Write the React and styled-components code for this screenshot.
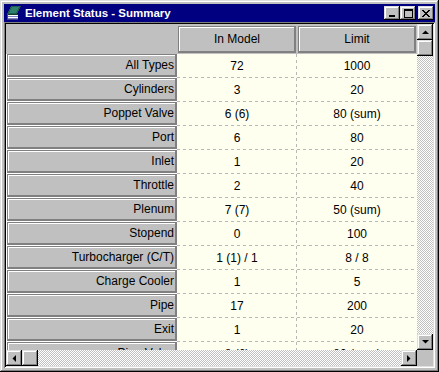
import React from 'react';
import styled, { createGlobalStyle } from 'styled-components';

const GlobalStyle = createGlobalStyle`
  html, body {
    margin: 0;
    padding: 0;
    background: #c0c0c0;
  }
  * {
    box-sizing: border-box;
  }
`;

const rows = [
  ['All Types', '72', '1000'],
  ['Cylinders', '3', '20'],
  ['Poppet Valve', '6 (6)', '80 (sum)'],
  ['Port', '6', '80'],
  ['Inlet', '1', '20'],
  ['Throttle', '2', '40'],
  ['Plenum', '7 (7)', '50 (sum)'],
  ['Stopend', '0', '100'],
  ['Turbocharger (C/T)', '1 (1) / 1', '8 / 8'],
  ['Charge Cooler', '1', '5'],
  ['Pipe', '17', '200'],
  ['Exit', '1', '20'],
  ['Pipe Valve', '8 (6)', '80 (sum)'],
];

const raised = `
  box-shadow: inset -1px -1px #000, inset 1px 1px #dfdfdf,
    inset -2px -2px #808080, inset 2px 2px #fff;
`;

const Window = styled.div`
  width: 439px;
  height: 372px;
  padding: 4px;
  background: #c0c0c0;
  display: flex;
  flex-direction: column;
  font-family: 'Liberation Sans', Arial, sans-serif;
  font-size: 12px;
  color: #000;
  ${raised}
`;

const TitleBar = styled.div`
  height: 18px;
  background: #000080;
  display: flex;
  align-items: center;
  padding: 0 1px 0 2px;
  gap: 3px;
`;

const Title = styled.span`
  flex: 1;
  color: #fff;
  font-weight: bold;
  font-size: 11.5px;
  white-space: nowrap;
`;

const CaptionButtons = styled.div`
  display: flex;
  align-items: center;
`;

const CaptionButton = styled.div`
  width: 16px;
  height: 14px;
  background: #c0c0c0;
  display: flex;
  align-items: center;
  justify-content: center;
  margin-left: ${(p) => (p.$gap ? '2px' : '0')};
  ${raised}
`;

const Client = styled.div`
  flex: 1;
  padding: 2px;
  display: grid;
  grid-template-columns: 411px 16px;
  grid-template-rows: 326px 16px;
  box-shadow: inset 1px 1px #808080, inset -1px -1px #fff,
    inset 2px 2px #000, inset -2px -2px #dfdfdf;
`;

const GridArea = styled.div`
  overflow: hidden;
  background: #c0c0c0;
`;

const Table = styled.div`
  display: grid;
  grid-template-columns: 171px 120px 120px;
  grid-template-rows: 30px;
  grid-auto-rows: 24px;
`;

const Corner = styled.div`
  background: #c0c0c0;
`;

const ColHeadSlot = styled.div`
  background: #c0c0c0;
  padding: 2px 1px 1px 1px;
`;

const HeadButton = styled.div`
  height: 100%;
  background: #c0c0c0;
  border: 1px solid #808080;
  border-right-width: 2px;
  border-bottom-width: 2px;
  box-shadow: inset 1px 1px #fff;
  display: flex;
  align-items: center;
  justify-content: ${(p) => (p.$right ? 'flex-end' : 'center')};
  padding: 0 1px 0 2px;
  white-space: nowrap;
  overflow: hidden;
`;

const RowHeadSlot = styled.div`
  background: #fff;
  padding: 0 0 1px 1px;
`;

const Cell = styled.div`
  display: flex;
  align-items: center;
  justify-content: center;
  white-space: nowrap;
  background: ${(p) =>
      p.$divider
        ? 'repeating-linear-gradient(to bottom, #b8b8b8 0 3px, transparent 3px 6px) right top / 1px 100% no-repeat, '
        : ''}
    repeating-linear-gradient(to right, #b8b8b8 0 3px, transparent 3px 6px) left bottom / 100% 1px no-repeat,
    #fffff0;
`;

const VScroll = styled.div`
  display: flex;
  flex-direction: column;
`;

const HScroll = styled.div`
  display: flex;
`;

const Track = styled.div`
  flex: 1;
  background: repeating-conic-gradient(#c0c0c0 0 25%, #fff 0 50%) 0 0 / 2px 2px;
`;

const ScrollButton = styled.div`
  width: 16px;
  height: 16px;
  flex: none;
  background: #c0c0c0;
  display: flex;
  align-items: center;
  justify-content: center;
  ${raised}
`;

const SizeCorner = styled.div`
  background: #c0c0c0;
`;

const BookIcon = () => (
  <svg width="16" height="16" viewBox="0 0 16 16" shapeRendering="crispEdges">
    <polygon points="5,1 15,1 11,9 1,9" fill="#1f5f4f" />
    <polygon points="6,2 13,2 10,8 3,8" fill="#2f7f6a" />
    <rect x="1" y="9" width="11" height="1" fill="#0f3f33" />
    <rect x="2" y="10" width="10" height="4" fill="#fff" />
    <rect x="2" y="11" width="10" height="1" fill="#8080c0" />
    <rect x="2" y="13" width="10" height="1" fill="#8080c0" />
    <rect x="1" y="9" width="1" height="6" fill="#404080" />
    <rect x="1" y="14" width="11" height="1" fill="#404080" />
  </svg>
);

const MinGlyph = () => (
  <svg width="8" height="7" viewBox="0 0 8 7" shapeRendering="crispEdges">
    <rect x="1" y="5" width="6" height="2" fill="#000" />
  </svg>
);

const MaxGlyph = () => (
  <svg width="9" height="9" viewBox="0 0 9 9" shapeRendering="crispEdges">
    <rect x="0" y="0" width="9" height="2" fill="#000" />
    <rect x="0" y="0" width="1" height="9" fill="#000" />
    <rect x="8" y="0" width="1" height="9" fill="#000" />
    <rect x="0" y="8" width="9" height="1" fill="#000" />
  </svg>
);

const CloseGlyph = () => (
  <svg width="8" height="7" viewBox="0 0 8 7" shapeRendering="crispEdges">
    {[0, 1, 2, 3, 4, 5, 6].map((i) => (
      <React.Fragment key={i}>
        <rect x={i} y={i} width="2" height="1" fill="#000" />
        <rect x={6 - i} y={i} width="2" height="1" fill="#000" />
      </React.Fragment>
    ))}
  </svg>
);

const Arrow = ({ dir }) => {
  const pts = {
    up: '0,4 7,4 3.5,0.5',
    down: '0,0 7,0 3.5,3.5',
    left: '4,0 4,7 0.5,3.5',
    right: '0,0 0,7 3.5,3.5',
  }[dir];
  const vertical = dir === 'up' || dir === 'down';
  return (
    <svg
      width={vertical ? 7 : 4}
      height={vertical ? 4 : 7}
      viewBox={vertical ? '0 0 7 4' : '0 0 4 7'}
    >
      <polygon points={pts} fill="#000" />
    </svg>
  );
};

const App = () => (
  <>
    <GlobalStyle />
    <Window>
      <TitleBar>
        <BookIcon />
        <Title>Element Status - Summary</Title>
        <CaptionButtons>
          <CaptionButton>
            <MinGlyph />
          </CaptionButton>
          <CaptionButton>
            <MaxGlyph />
          </CaptionButton>
          <CaptionButton $gap>
            <CloseGlyph />
          </CaptionButton>
        </CaptionButtons>
      </TitleBar>
      <Client>
        <GridArea>
          <Table>
            <Corner />
            <ColHeadSlot>
              <HeadButton>In Model</HeadButton>
            </ColHeadSlot>
            <ColHeadSlot>
              <HeadButton>Limit</HeadButton>
            </ColHeadSlot>
            {rows.map(([name, model, limit]) => (
              <React.Fragment key={name}>
                <RowHeadSlot>
                  <HeadButton $right>{name}</HeadButton>
                </RowHeadSlot>
                <Cell $divider>{model}</Cell>
                <Cell>{limit}</Cell>
              </React.Fragment>
            ))}
          </Table>
        </GridArea>
        <VScroll>
          <ScrollButton>
            <Arrow dir="up" />
          </ScrollButton>
          <ScrollButton />
          <Track />
          <ScrollButton>
            <Arrow dir="down" />
          </ScrollButton>
        </VScroll>
        <HScroll>
          <ScrollButton>
            <Arrow dir="left" />
          </ScrollButton>
          <ScrollButton />
          <Track />
          <ScrollButton>
            <Arrow dir="right" />
          </ScrollButton>
        </HScroll>
        <SizeCorner />
      </Client>
    </Window>
  </>
);

export default App;
